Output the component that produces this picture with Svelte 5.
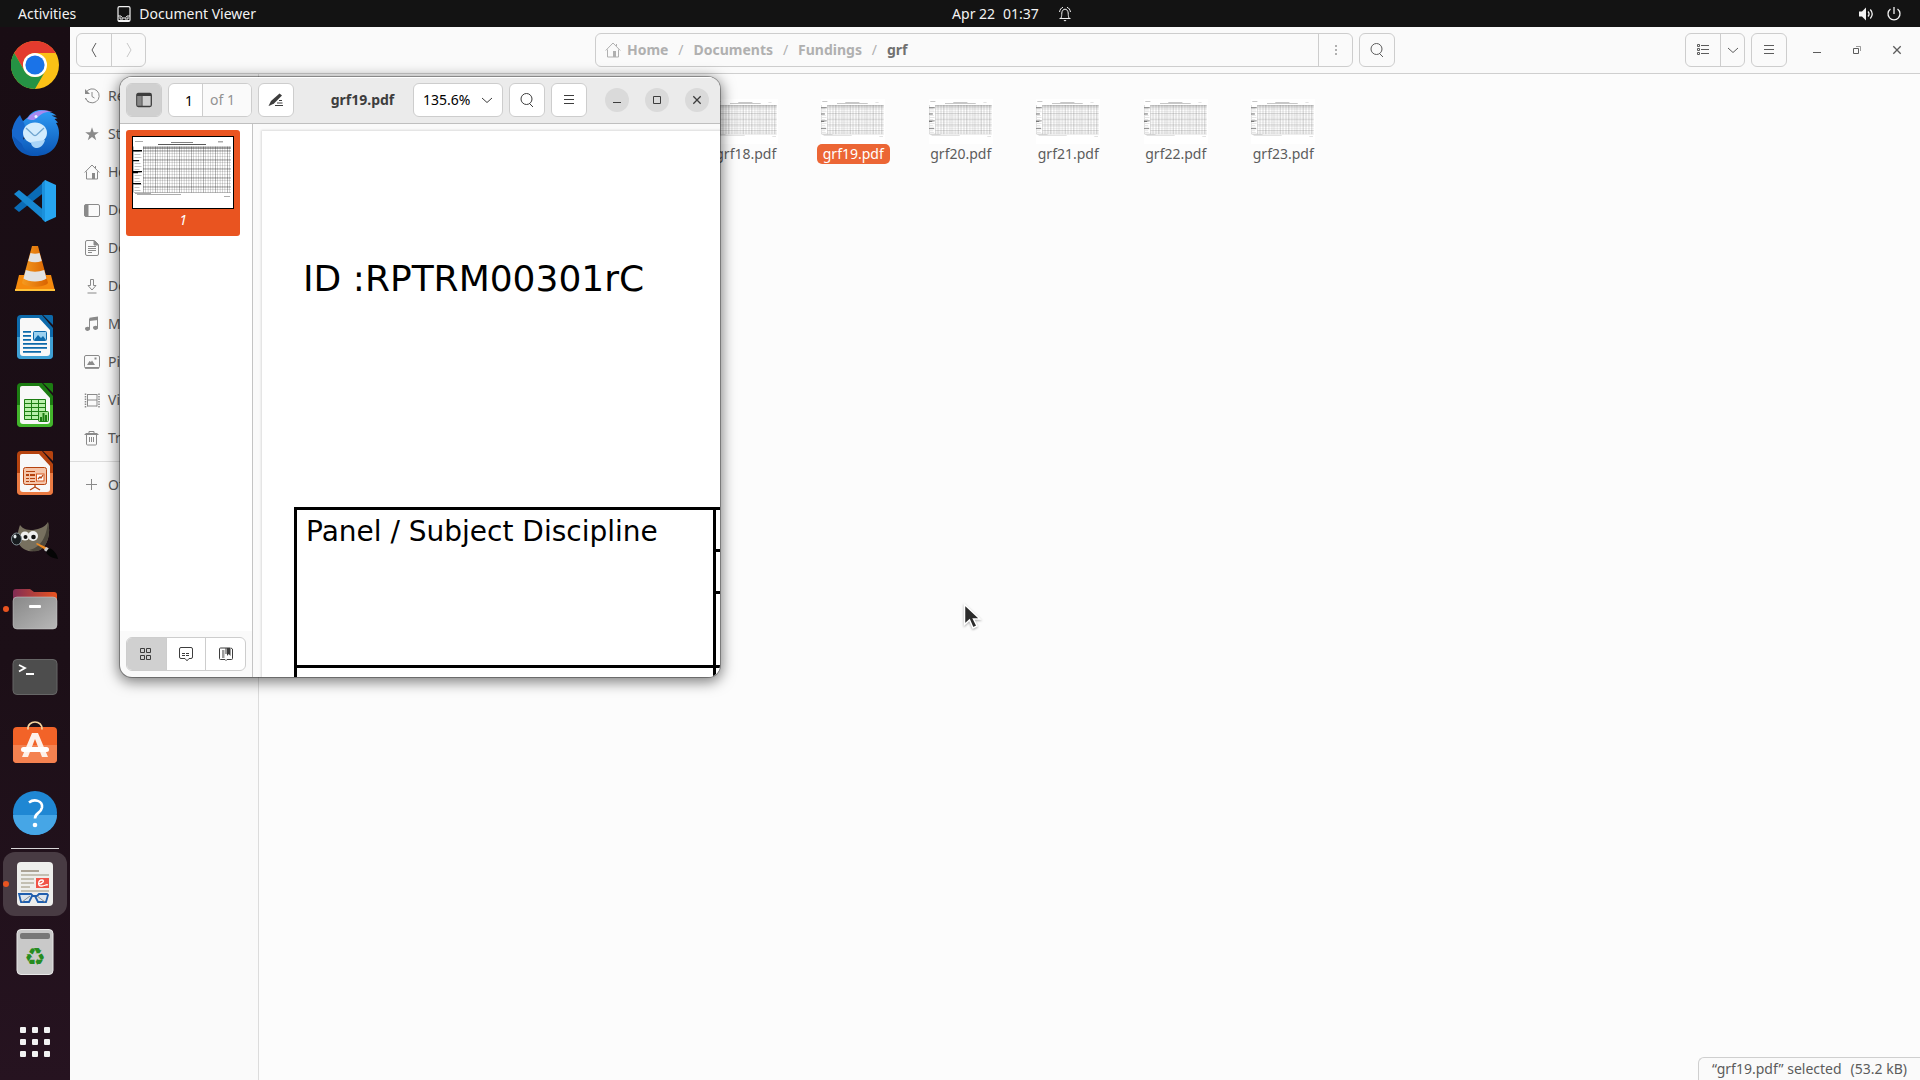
<script>
  const places = [
    { name: 'Recent', icon: 'recent' },
    { name: 'Starred', icon: 'star' },
    { name: 'Home', icon: 'home' },
    { name: 'Desktop', icon: 'desktop' },
    { name: 'Documents', icon: 'document' },
    { name: 'Downloads', icon: 'download' },
    { name: 'Music', icon: 'music' },
    { name: 'Pictures', icon: 'picture' },
    { name: 'Videos', icon: 'video' },
    { name: 'Trash', icon: 'trash' }
  ];
  const files = ['grf18.pdf', 'grf19.pdf', 'grf20.pdf', 'grf21.pdf', 'grf22.pdf', 'grf23.pdf'];
  const crumbs = ['Home', 'Documents', 'Fundings'];
  const apps = [
    'Chrome', 'Thunderbird', 'Code', 'VLC', 'Writer', 'Calc', 'Impress', 'GIMP',
    'Files', 'Terminal', 'Software', 'Help'
  ];
  const tones = {
    Writer: ['#0d6aab', '#3fa0d4'],
    Calc: ['#1c7d12', '#43b52c'],
    Impress: ['#b5430f', '#ea7b43']
  };
  const range = (n) => Array.from({ length: n }, (_, i) => i);
  let page = $state('1');
  let zoom = $state('135.6%');
</script>

{#snippet sheet(ink)}
  <svg class="sheet" viewBox="0 0 100 71" preserveAspectRatio="none" aria-hidden="true">
    <rect width="100" height="71" fill="#fff" />
    <g fill={ink}>
      <path d="M38 5h22v.8H38zM25 7h48v1H25zM2 4h8v.6H2zM85 4.600h5v.7h-5zM4 57h44v.6H4zM2 56h16v.5H2zM91 59h6v.6h-6z" opacity=".65" />
      <rect x="10" y="9.500" width="88" height="2.500" opacity=".35" />
      {#each range(14) as r}
        <rect x="10" y={13 + r * 3} width="88" height={r % 3 === 0 ? 1.8 : 1} opacity={r % 3 === 0 ? 0.22 : 0.12} />
        <rect x="1.500" y={14 + r * 3} width={5 + (r % 3)} height=".6" opacity=".4" />
      {/each}
      {#each range(37) as c}
        <rect x={10 + c * 2.4} y="9.500" width={c % 5 === 0 ? 0.8 : 0.6} height="46" opacity={c % 5 === 0 ? 0.36 : 0.28} />
      {/each}
      <path d="M0 9.500h.8v46H0zM1 55h97v.8H1z" opacity=".35" />
    </g>
    <path d="M0 13h9v1.400H0zM0 23h6v1.300H0zM0 34h9v1.300H0zM0 35.300h5v1H0zM0 46h8v1.300H0z" fill={ink === '#000' ? '#000' : '#777'} />
  </svg>
{/snippet}

{#snippet icon(name)}
  <svg class="icon" viewBox="0 0 16 16" aria-hidden="true" fill="none" stroke="currentColor">
    {#if name === 'recent'}
      <path d="M2 4.500A7 7 0 1 1 1.500 10M8 4v4.500l2.500 1.500" /><path d="M1 1v5h5z" fill="currentColor" stroke="none" />
      <path d="M1.500 10a7 7 0 0 0 3 4" stroke-dasharray="2 1.500" />
    {:else if name === 'star'}
      <path d="M8 1.300 9.700 6.200h5.100l-4.100 3 1.500 5L8 11.100 3.800 14.200l1.500-5-4.100-3h5.100z" fill="currentColor" stroke="none" />
    {:else if name === 'home'}
      <path d="M.7 8.500 8 1l7.300 7.500M2.500 7.500v7.500h11V7.500M11.500 2v2" /><path d="M8 9h3v6H8z" fill="currentColor" stroke="none" />
    {:else if name === 'desktop'}
      <rect x=".5" y="2.500" width="15" height="12" rx="1.500" /><path d="M1 3h3v11H1z" fill="currentColor" />
    {:else if name === 'document'}
      <path d="M10.500.500H3A1.500 1.500 0 0 0 1.500 2v12A1.500 1.500 0 0 0 3 15.500h10a1.500 1.500 0 0 0 1.500-1.500V4.500zM4 6.500h8M4 8.500h8M4 10.500h8M4 12.500h4" /><path d="M10 1v4h4z" fill="currentColor" />
    {:else if name === 'download'}
      <path d="M6.500 1.500h3v6H12L8 12 4 7.500h2.500zM3.500 15h9" />
    {:else if name === 'music'}
      <path d="M5.500 13V3l8-1.500v10" /><path d="M5.500 1.700 14 .500V4L5.500 5zM1 12.500C1 11 4 10 6 11.500v2C5 15.500 1 15.500 1 12.500zM9 11.500c0-1.500 3-2.500 5-1v2c-1 2-5 2-5-1z" fill="currentColor" stroke="none" />
    {:else if name === 'picture'}
      <rect x=".5" y="1.500" width="15" height="12.500" rx="1.500" /><path d="M1 13h14v1.700H1zM3 11l2.500-4L7 8l1-1.500 3 4.500zM10.500 3.500h2v2h-2z" fill="currentColor" stroke="none" />
    {:else if name === 'video'}
      <path d="M3.500 2v12.500M13 2v12.500M3.500 2.500H13M3.500 8H13M3.500 14H13" /><path d="M1.500 1.500v14M15 1.500v14" stroke-dasharray="1.500 1" stroke-width="1.500" />
    {:else if name === 'trash'}
      <path d="M.5 4.500h14M1.500 3.500h12M5 3.500v-2h5v2M2.500 5v9a1 1 0 0 0 1 1h8a1 1 0 0 0 1-1V5M5.500 7v5M7.500 7v5M9.500 7v5" />
    {:else if name === 'plus'}
      <path d="M7.500 2v11M2 7.500h11" />
    {:else if name === 'back'}
      <path d="M10 1 6 8l4 7" />
    {:else if name === 'forward'}
      <path d="M6 1l4 7-4 7" />
    {:else if name === 'search'}
      <circle cx="7.500" cy="7" r="5.500" /><path d="M10.500 11.500 14 15" />
    {:else if name === 'menu'}
      <path d="M3 3.500h10M3 7.500h10M3 11.500h10" />
    {:else if name === 'more'}
      <path d="M7 3h2v2H7zM7 7h2v2H7zM7 11h2v2H7z" fill="currentColor" stroke="none" />
    {:else if name === 'list'}
      <path d="M2.500 2.500h2v2h-2zM2.500 6.500h2v2h-2zM2.500 10.500h2v2h-2zM6 3.500h8M6 7.500h8M6 11.500h8" />
    {:else if name === 'down'}
      <path d="M3 6l5 4.500L13 6" />
    {:else if name === 'minimize'}
      <path d="M4 10.500h8" />
    {:else if name === 'restore'}
      <path d="M4.500 6.500h5v5h-5z" /><path d="M7 4.500h4.500V9" opacity=".6" />
    {:else if name === 'maximize'}
      <path d="M4.500 4.500h7v7h-7z" />
    {:else if name === 'close'}
      <path d="M4.300 4.300l7.400 7.400M11.700 4.300l-7.400 7.400" stroke-width="1.300" />
    {:else if name === 'panel'}
      <rect x=".8" y="1.500" width="14.500" height="13" rx="1.500" stroke-width="1.300" /><path d="M1 2h14v2H1z" fill="currentColor" stroke="none" /><path d="M1.500 4h4v10h-4z" fill="currentColor" stroke="none" opacity=".5" /><path d="M6 4v10" />
    {:else if name === 'annotate'}
      <path d="M11.500 1.500 14 3.500 6 11.500 2 13.500.5 14 3 9z" fill="currentColor" stroke="none" /><path d="M11 8.500h3M9 11h5.500M7 13.500h8" />
    {:else if name === 'grid'}
      <path d="M2.500 2.500h4v4h-4zM8.500 2.500h4v4h-4zM2.500 9.500h4v4h-4zM8.500 9.500h4v4h-4z" />
    {:else if name === 'note'}
      <path d="M3 1.500h10A1.500 1.500 0 0 1 14.500 3v8a1.500 1.500 0 0 1-1.500 1.500h-2l-2 2.300-2-2.300H3A1.500 1.500 0 0 1 1.500 11V3A1.500 1.500 0 0 1 3 1.500z" /><path d="M4 7.500h8M4 9.500h8" stroke-dasharray="3 1" />
    {:else if name === 'bookmark'}
      <path d="M9 2H2.500A1 1 0 0 0 1.500 3v9.500a1 1 0 0 0 1 1H7l1 1 1-1h4.500a1 1 0 0 0 1-1V3L13 2M8 2v6M4 5h2.500M4 7h2.500M4 9h2.500M4 11h2.500" /><path d="M9 1.500h3.500V10L10.700 8 9 10z" fill="currentColor" stroke="none" />
    {:else if name === 'viewer'}
      <rect x="2" y=".6" width="12" height="14.800" rx="1.500" stroke-width="1.200" /><path d="M2 10h3l1 1.500M14 10h-3l-1 1.500M4 11v2h3v-2M9 11v2h3v-2M2 14.500h12" />
    {:else if name === 'bell'}
      <path d="M4 12c.8-2 .7-3 .8-5C5 4.500 6.500 3.200 8 3.200s3 1.300 3.200 3.800c.1 2 0 3 .8 5M2.500 12.500h11M2.500 6C3 3.500 4 2 6 1.300M13.500 6C13 3.500 12 2 10 1.300" /><path d="M6.500 14h3L8 15.500z" fill="currentColor" stroke="none" />
    {:else if name === 'volume'}
      <path d="M1 5.500h3L8 1.500v13l-4-4H1z" fill="currentColor" stroke="none" /><path d="M10 5.500c1.300 1.500 1.300 3.500 0 5M12.300 3.500c2.300 2.700 2.300 6.300 0 9" stroke-width="1.300" />
    {:else if name === 'power'}
      <path d="M4.500 3A6 6 0 1 0 11.500 3M8 1v7" stroke-width="1.300" />
    {/if}
  </svg>
{/snippet}

{#snippet appIcon(name)}
  <svg class="app-icon" viewBox="0 0 48 48" aria-hidden="true">
    {#if name === 'Chrome'}
      <circle cx="24" cy="24" r="24" fill="#fbc116" />
      <path d="M3.200 12A24 24 0 0 1 44.800 12H24A12 12 0 0 0 13.600 30z" fill="#e33b2e" />
      <path d="M3.200 12A24 24 0 0 0 24 48l10.400-18A12 12 0 0 1 13.600 30z" fill="#259344" />
      <circle cx="24" cy="24" r="12" fill="#fff" /><circle cx="24" cy="24" r="9.600" fill="#1a73e8" />
    {:else if name === 'Thunderbird'}
      <defs><linearGradient id="bird" x1="0" y1="0" x2="0" y2="1"><stop offset="0" stop-color="#2f9cf5" /><stop offset="1" stop-color="#0a55b5" /></linearGradient></defs>
      <path d="M1 20C0 36 9 47 24 47c15 0 24-9 24-23 0-4-1-7-3-10l2-.5-3.500-3.500 3-.8-6-2.700h5C34-1 23-1 17 8l-6 5c2 8 6 9 8 12L8 34C3 28 5 23 1 20z" fill="url(#bird)" />
      <path d="M9 6C3 12-1 22 2 31l10 5c-1-8 4-12 2-17C14 14 11 11 9 6z" fill="#1768cd" />
      <path d="M16 10C22 1 33 0 43 3c-9-1-13 2-17 6-3 3-6 2-10 1z" fill="#a78af0" />
      <circle cx="25" cy="7.500" r="1.500" fill="#e8f4ff" />
      <ellipse cx="24" cy="24" rx="12" ry="10.500" fill="#d3ecfd" /><path d="M20 33c0 4 3 6 6 6 4 0 7-4 8-8z" fill="#a9d5f8" />
      <path d="m15 19 7.500 7q1.500 1 3 0l7.500-7" stroke="#6fa5cf" stroke-width="1.300" fill="none" />
      <path d="M2 27c1 12 10 18 20 18-6-2-10-5-11-10z" fill="#0f58b8" />
    {:else if name === 'Code'}
      <path d="m3 31 5 4L35 14V3z" fill="#0a6bb5" /><path d="m3 17 5-4 27 22v10z" fill="#1788d1" /><path d="m34 3 11 5v32l-11 5z" fill="#27a6f1" /><path d="m34 3-3 3v36l3 3z" fill="#1b91dc" />
    {:else if name === 'VLC'}
      <defs><linearGradient id="cone"><stop stop-color="#f59a20" /><stop offset="1" stop-color="#d96300" /></linearGradient></defs>
      <path d="M8 30h32l4 16H4z" fill="#f58a0d" /><path d="M4 44h40v2H4z" fill="#ffc23a" />
      <path d="M21 1h6l10 37c-4 5-22 5-26 0z" fill="url(#cone)" /><path d="M19.500 8q4.500 1.500 9 0l2.300 8q-6.800 2.500-13.600 0zM14.800 25q9.200 3.500 18.400 0l2.300 8.500c-5 4-18 4-23 0z" fill="#e2e2e2" />
    {:else if name === 'Writer' || name === 'Calc' || name === 'Impress'}
      <path d="M10 2h21l11 13v27a4 4 0 0 1-4 4H10a4 4 0 0 1-4-4V6a4 4 0 0 1 4-4z" fill={tones[name][0]} /><path d="M6 24h36v18a4 4 0 0 1-4 4H10a4 4 0 0 1-4-4z" fill={tones[name][1]} />
      <path d="M11 5h17l11 12v23a3 3 0 0 1-3 3H12a3 3 0 0 1-3-3V7a2 2 0 0 1 2-2z" fill="#f8f8f8" /><path d="M32 2h8.500A1.500 1.500 0 0 1 42 3.500V12z" fill={tones[name][0]} />
      {#if name === 'Writer'}
        <path d="M12 18h8v1.700h-8zM12 22h8v1.700h-8zM12 26h8v1.700h-8zM12 30h24v1.700H12zM12 34h24v1.700H12zM12 38h18v1.700H12z" fill="#0d6aab" /><rect x="22.500" y="18.500" width="13" height="9" rx="1" fill="#9bd0ef" stroke="#0d6aab" /><path d="m23 27 4-5 3 3 2-2 3 4z" fill="#0d6aab" />
      {:else if name === 'Calc'}
        <path d="M13.500 18.500h21v20h-21z" fill="#b8efaa" stroke="#1c7d12" /><path d="M13 22.500h22M13 26.500h22M13 30.500h22M13 34.500h22M20.500 18v20M27.500 18v20" stroke="#1c7d12" /><rect x="27.500" y="30.500" width="10" height="10" rx="1" fill="#a5e493" stroke="#1c7d12" /><path d="M29 36h2v4h-2zM31.500 32h2v8h-2zM34 34h2v6h-2z" fill="#1c7d12" />
      {:else}
        <rect x="12.500" y="18.500" width="23" height="17" rx="2" fill="#f5c5a9" stroke="#b5430f" /><path d="M15 22h9v1H15zM15 25h3v2h-3zM19 25h5v2h-5zM15 29h3v1h-3zM19 29h5v1h-5zM15 32h3v1h-3zM19 32h5v1h-5z" fill="#b5430f" /><rect x="25.500" y="25" width="7.500" height="7" fill="#fff" stroke="#d85a20" /><path d="m27 30 2-2 1 1 2-3M24 35v3l-5 3M24 38l5 3" fill="none" stroke="#b5430f" stroke-width="1.300" />
      {/if}
    {:else if name === 'GIMP'}
      <path d="M9 8c3 4 6 5 13 5 7-1 12-3 15-8 3 10 0 24-8 28-8 3-17 1-21-6-3-5-1-13 1-19z" fill="#77705f" /><path d="M37 5c3 10 0 24-8 28-4 2-8 1-11 0 10-2 17-10 19-28z" fill="#4d483d" />
      <circle cx="14" cy="19" r="4.500" fill="#eee" /><circle cx="22" cy="19" r="5" fill="#eee" /><circle cx="14.500" cy="20" r="2" fill="#111" /><circle cx="22.500" cy="20" r="2.300" fill="#111" />
      <ellipse cx="5.500" cy="22" rx="5" ry="6" fill="#171b1e" stroke="#87939a" /><ellipse cx="4" cy="19.500" rx="1.500" ry="2" fill="#e3e9ec" />
      <path d="m26 26 11 5-1 3-11-7z" fill="#ee8b24" /><path d="m35 30 4 2-2 4-4-3z" fill="#ccc" /><path d="M38 31c5 2 8 6 9 11-6-1-10-3-12-7z" fill="#050505" />
    {:else if name === 'Files'}
      <defs><linearGradient id="folder"><stop stop-color="#812c54" /><stop offset="1" stop-color="#e95420" /></linearGradient><linearGradient id="front" x2="1" y2="1"><stop stop-color="#888" /><stop offset="1" stop-color="#b8b8b8" /></linearGradient></defs>
      <path d="M5 4h14l4 3h20a3 3 0 0 1 3 3v15H2V7a3 3 0 0 1 3-3z" fill="url(#folder)" /><rect x="2" y="12" width="44" height="32" rx="4" fill="url(#front)" stroke="#ccc" stroke-width=".5" /><rect x="18" y="20" width="12" height="3" rx="1" fill="#fff" />
    {:else if name === 'Terminal'}
      <rect x="2" y="6.500" width="44" height="35" rx="4" fill="#4d4d4d" stroke="#666" /><path d="m8 12 6 3-6 3.500M15 21h8" stroke="#fff" stroke-width="1.800" fill="none" />
    {:else if name === 'Software'}
      <rect x="2" y="6" width="44" height="36" rx="4" fill="#f26328" /><path d="M2 24h44v14a4 4 0 0 1-4 4H6a4 4 0 0 1-4-4z" fill="#f48250" /><path d="M17 8.500c-1-10 15-10 14 0" fill="none" stroke="#f7d5a0" stroke-width="1.700" /><path d="M21 12h6l10 24h-6l-7-18-7 18h-6z" fill="#fdf1ea" /><rect x="10" y="26" width="28" height="5" rx="2.500" fill="#fff" />
    {:else if name === 'Help'}
      <circle cx="24" cy="24" r="22" fill="#1f87d3" /><path d="M2 26a22 20 0 0 0 44 0z" fill="#46a6e6" /><path d="M18 13.500c5-4 14-2 13 5-1 6-7 5-7 11" fill="none" stroke="#fff" stroke-width="2.600" /><circle cx="24" cy="36" r="2.300" fill="#fff" />
    {:else if name === 'Viewer'}
      <rect x="6" y="2" width="36" height="44" rx="4" fill="#eeeeec" /><path d="M10 10h18v2H10z" fill="#aba295" /><path d="M10 14h28v2H10zM10 18h13v2H10zM10 22h13v2H10zM10 26h9v2h-9zM10 30h28v2H10z" fill="#c3bfb2" /><rect x="25" y="18" width="13" height="10" fill="#f05348" /><path d="M27 24c5 0 7-4 4-4-4 0-5 7 0 6 3 0 4-2 6-1" stroke="#fff" fill="none" stroke-width="1.300" />
      <path d="M8 34h12l2 2h4l2-2h8l1 1-2 7h-8l-3-6h-3l-3 6h-8z" fill="#dce5ed" stroke="#205fae" stroke-width="1.800" /><path d="m11 42 8-6M26 36l8 6" stroke="#888" />
    {:else if name === 'Trash'}
      <rect x="6" y="1.500" width="36" height="45" rx="4" fill="#c9c9c9" stroke="#e8e8e8" /><rect x="9" y="5" width="30" height="6" rx="2" fill="#777" />
      <text class="recycle" x="24" y="37" text-anchor="middle">♻</text>
    {/if}
  </svg>
{/snippet}

<div class="desktop">
  <header class="topbar">
    <div class="top-left">
      <button class="top-item">Activities</button>
      <button class="top-item app-menu">{@render icon('viewer')}Document Viewer</button>
    </div>
    <button class="top-item clock"><span>Apr 22</span><span>01:37</span>{@render icon('bell')}</button>
    <button class="top-item system" aria-label="System menu">{@render icon('volume')}{@render icon('power')}</button>
  </header>

  <div class="workspace">
    <nav class="dock" aria-label="Dock">
      {#each apps as app}
        <button class="tile" class:running={app === 'Files'} aria-label={app}>{@render appIcon(app)}</button>
      {/each}
      <hr />
      <button class="tile active running" aria-label="Document Viewer">{@render appIcon('Viewer')}</button>
      <button class="tile" aria-label="Trash">{@render appIcon('Trash')}</button>
      <button class="show-apps" aria-label="Show Applications">
        {#each range(9) as dot (dot)}<i></i>{/each}
      </button>
    </nav>

    <main class="files">
      <header class="files-bar">
        <div class="group">
          <button aria-label="Back">{@render icon('back')}</button>
          <button aria-label="Forward" disabled>{@render icon('forward')}</button>
        </div>
        <div class="location">
          <div class="group path">
            <div class="crumbs">
              {@render icon('home')}
              {#each crumbs as crumb}
                <a href="#{crumb}">{crumb}</a><span>/</span>
              {/each}
              <a href="#grf" class="current">grf</a>
            </div>
            <button aria-label="Folder menu">{@render icon('more')}</button>
          </div>
          <div class="group"><button aria-label="Search">{@render icon('search')}</button></div>
        </div>
        <div class="bar-end">
          <div class="group">
            <button aria-label="List view">{@render icon('list')}</button>
            <button class="slim" aria-label="View options">{@render icon('down')}</button>
          </div>
          <div class="group"><button aria-label="Menu">{@render icon('menu')}</button></div>
          <div class="controls">
            <button aria-label="Minimize">{@render icon('minimize')}</button>
            <button aria-label="Restore">{@render icon('restore')}</button>
            <button aria-label="Close">{@render icon('close')}</button>
          </div>
        </div>
      </header>
      <div class="files-body">
        <aside class="places">
          {#each places as place}
            <a href="#{place.name}">{@render icon(place.icon)}<span>{place.name}</span></a>
          {/each}
          <hr />
          <a href="#other">{@render icon('plus')}<span>Other Locations</span></a>
        </aside>
        <section class="listing">
          <div class="file-grid">
            {#each files as file}
              <button class="file" class:selected={file === 'grf19.pdf'}>
                {@render sheet('#555')}
                <span>{file}</span>
              </button>
            {/each}
          </div>
          <div class="status"><span>“grf19.pdf” selected</span><span>(53.2 kB)</span></div>
        </section>
      </div>
    </main>
  </div>

  <section class="viewer" aria-label="grf19.pdf">
    <header class="viewer-bar">
      <div class="group"><button class="pressed" aria-label="Side pane">{@render icon('panel')}</button></div>
      <label class="group pager">
        <input type="text" bind:value={page} aria-label="Page" /><span>of 1</span>
      </label>
      <div class="group"><button aria-label="Annotate">{@render icon('annotate')}</button></div>
      <h1>grf19.pdf</h1>
      <div class="group zoom">
        <select bind:value={zoom} aria-label="Zoom"><option>135.6%</option></select>
        {@render icon('down')}
      </div>
      <div class="group"><button aria-label="Find">{@render icon('search')}</button></div>
      <div class="group"><button aria-label="Menu">{@render icon('menu')}</button></div>
      <div class="controls round">
        <button aria-label="Minimize">{@render icon('minimize')}</button>
        <button aria-label="Maximize">{@render icon('maximize')}</button>
        <button aria-label="Close">{@render icon('close')}</button>
      </div>
    </header>
    <div class="viewer-body">
      <aside class="pages">
        <div class="page-list">
          <button class="page-thumb">{@render sheet('#000')}<em>1</em></button>
        </div>
        <div class="pane-switch">
          <div class="group">
            <button class="pressed" aria-label="Thumbnails">{@render icon('grid')}</button>
            <button aria-label="Annotations">{@render icon('note')}</button>
            <button aria-label="Bookmarks">{@render icon('bookmark')}</button>
          </div>
        </div>
      </aside>
      <div class="canvas">
        <article class="paper">
          <p>ID :RPTRM00301rC</p>
          <table>
            <colgroup><col class="first" /><col /></colgroup>
            <tbody>
              <tr><th rowspan="3" scope="col">Panel / Subject Discipline</th><td></td></tr>
              <tr><td></td></tr>
              <tr class="tall"><td></td></tr>
              <tr><td></td><td></td></tr>
            </tbody>
          </table>
        </article>
      </div>
    </div>
  </section>

  <svg class="pointer" viewBox="0 0 20 28" aria-hidden="true">
    <path d="M1.500 1.500v20l5-4.500 3.500 8 4-2-3.500-7H17z" fill="#2b2b2b" stroke="#fff" stroke-width="1.500" />
  </svg>
</div>

<style>
  :global(body) { margin: 0; overflow: hidden; }
  .desktop {
    position: relative; display: flex; flex-direction: column; height: 100vh; overflow: hidden;
    font: 14px/20px "Noto Sans", "Open Sans", sans-serif; color: #5c5c5c; background: #fcfcfc;
  }
  .desktop :is(button, input, select) {
    font: inherit; color: inherit; background: none; border: 0; padding: 0; margin: 0; outline: 0;
  }
  a { color: inherit; text-decoration: none; }
  svg { display: block; flex: none; }
  .icon { width: 16px; height: 16px; }

  .topbar {
    display: grid; grid-template-columns: 1fr auto 1fr; align-items: center; height: 27px; flex: none;
    padding: 0 18px; background: #131313; color: #f2f2f2;
  }
  .top-left { display: flex; gap: 40px; }
  .topbar .top-item { display: flex; align-items: center; gap: 7px; }
  .topbar .system { justify-self: end; gap: 12px; }
  .topbar .clock { gap: 8px; padding-left: 105px; }
  .clock .icon { margin-left: 10px; }

  .workspace { display: flex; flex: 1; min-height: 0; }
  .dock {
    width: 70px; flex: none; box-sizing: border-box; display: flex; flex-direction: column; align-items: center; gap: 4px;
    padding: 6px 0 23px; background: linear-gradient(#190d14, #1c0f17 60%, #261320);
  }
  .dock .tile { position: relative; display: grid; place-items: center; width: 64px; height: 64px; border-radius: 12px; }
  .app-icon { width: 48px; height: 48px; }
  .recycle { font: 24px "DejaVu Sans", sans-serif; fill: #258c20; }
  .dock .active { background: #483b43; }
  .dock .running::before {
    content: ""; position: absolute; left: 0; top: 29px; width: 6px; height: 6px; border-radius: 50%; background: #e95420;
  }
  .dock hr { width: 48px; height: 1px; margin: -1px 0; border: 0; background: #d8d5d7; }
  .dock .show-apps { display: grid; grid-template-columns: repeat(3, 6px); gap: 6px; margin-top: auto; }
  .show-apps i { width: 6px; height: 6px; border-radius: 1px; background: #f2f2f2; }

  .files { flex: 1; min-width: 0; display: flex; flex-direction: column; }
  .files-bar {
    display: grid; grid-template-columns: 1fr 800px 1fr; align-items: center; height: 46px; flex: none;
    padding: 0 6px; background: #fafafa; border-bottom: 1px solid #cfcfcf;
  }
  .group {
    display: flex; align-items: center; justify-self: start; box-sizing: border-box; height: 34px;
    border: 1px solid #cdcdcd; border-radius: 6px; overflow: hidden;
  }
  .desktop .group button { display: grid; place-items: center; width: 34px; height: 32px; }
  .desktop .group > * + button { border-left: 1px solid #cdcdcd; }
  .desktop .group button.slim { width: 24px; }
  .desktop .group button:disabled { color: #c8c8c8; }
  .location { display: flex; gap: 6px; }
  .path { flex: 1; font-weight: 700; color: #b0b0b0; }
  .crumbs { display: flex; align-items: center; flex: 1; padding-left: 9px; }
  .crumbs .icon { margin-right: 6px; }
  .crumbs span { width: 25px; text-align: center; font-weight: 400; }
  .crumbs .current { color: #707070; }
  .bar-end { display: flex; justify-self: end; gap: 6px; }
  .controls { display: flex; align-items: center; gap: 16px; padding: 0 5px 0 12px; }
  .desktop .controls button { display: grid; place-items: center; width: 24px; height: 24px; border-radius: 50%; }

  .files-body { display: flex; flex: 1; min-height: 0; }
  .places {
    width: 189px; flex: none; box-sizing: border-box; padding-top: 3px; background: #fafafa; border-right: 1px solid #dcdcdc;
  }
  .places a { display: flex; align-items: center; gap: 8px; height: 38px; padding-left: 14px; }
  .places .icon { color: #8a8a8a; }
  .places hr { height: 1px; margin: 4px 0; border: 0; background: #dcdcdc; }
  .listing { flex: 1; display: flex; flex-direction: column; justify-content: space-between; min-width: 0; }
  .file-grid { display: grid; grid-template-columns: repeat(6, 1fr); width: 645px; padding: 25px 0 0 433px; }
  .desktop .file { display: flex; flex-direction: column; align-items: center; }
  .file .sheet { width: 64px; height: 45px; }
  .file span { padding: 0 6px; border-radius: 5px; }
  .file.selected span { background: #ec6635; color: #fff; }
  .status {
    align-self: flex-end; display: flex; gap: 9px; box-sizing: border-box; height: 23px; padding: 1px 13px 0;
    border: 1px solid #cfcfcf; border-width: 1px 0 0 1px; border-radius: 6px 0 0 0; background: #fafafa;
  }

  .viewer {
    position: absolute; left: 120px; top: 77px; width: 600px; height: 600px; display: flex; flex-direction: column;
    border-radius: 12px; overflow: hidden; background: #fafafa; color: #3d3d3d;
    box-shadow: 0 0 0 1px #00000050, 0 3px 14px 2px #00000080;
  }
  .viewer-bar {
    display: flex; align-items: center; gap: 6px; height: 46px; flex: none; padding-left: 6px;
    background: #ebebeb; border-bottom: 1px solid #bfbfbf; box-shadow: inset 0 1px #fff;
  }
  .viewer .group { background: #fff; }
  .viewer .group .pressed { background: #d0d0d0; }
  .desktop .pager input { width: 33px; box-sizing: border-box; height: 32px; padding-right: 9px; text-align: right; color: #000; }
  .pager span { width: 41px; padding-left: 7px; line-height: 32px; border-left: 1px solid #cdcdcd; background: #fafafa; color: #929292; }
  .viewer-bar h1 { flex: 1; margin: 0; padding-left: 18px; text-align: center; font: 700 14px/20px "Noto Sans", sans-serif; }
  .zoom { position: relative; width: 90px; }
  .desktop .zoom select { width: 88px; height: 32px; padding: 0 26px 0 9px; appearance: none; color: #000; }
  .zoom .icon { position: absolute; right: 7px; top: 8px; pointer-events: none; }
  .round { padding: 0 11px 0 12px; }
  .desktop .round button { background: #dadada; }
  .viewer-body { display: flex; flex: 1; min-height: 0; }
  .pages { width: 132px; flex: none; display: flex; flex-direction: column; border-right: 1px solid #c4c4c4; }
  .page-list { flex: 1; padding: 6px; background: #fff; }
  .desktop .page-thumb {
    display: flex; flex-direction: column; align-items: center; box-sizing: border-box; width: 114px; height: 106px;
    padding-top: 6px; border-radius: 3px; background: #e95420; color: #fff;
  }
  .page-thumb .sheet { box-sizing: border-box; width: 102px; height: 73px; border: 1px solid #000; }
  .page-thumb em { line-height: 22px; }
  .pane-switch { padding: 6px; }
  .pane-switch .group { width: 120px; }
  .desktop .pane-switch button { flex: 1; box-sizing: border-box; }
  .canvas { flex: 1; min-width: 0; padding: 7px 0 0 9px; overflow: hidden; }
  .paper {
    width: 1140px; height: 806px; padding: 1px 0 0 32px; background: #fff; color: #000; box-shadow: 0 0 2px 1px #0000001f;
    font-family: "DejaVu Sans", sans-serif;
  }
  .paper p { margin: 125px 0 0 9px; font-size: 36px; line-height: 44px; }
  table { width: 1000px; margin-top: 206px; table-layout: fixed; border-collapse: collapse; }
  .first { width: 419px; }
  th, td { height: 42px; box-sizing: border-box; padding: 0; border: 3px solid #000; }
  .tall td { height: 74px; }
  th { padding: 5px 9px; vertical-align: top; text-align: left; font-size: 28px; line-height: 34px; font-weight: 400; white-space: nowrap; }

  .pointer { position: absolute; left: 963px; top: 603px; width: 20px; height: 28px; filter: drop-shadow(0 1px 1px #0005); }
</style>
